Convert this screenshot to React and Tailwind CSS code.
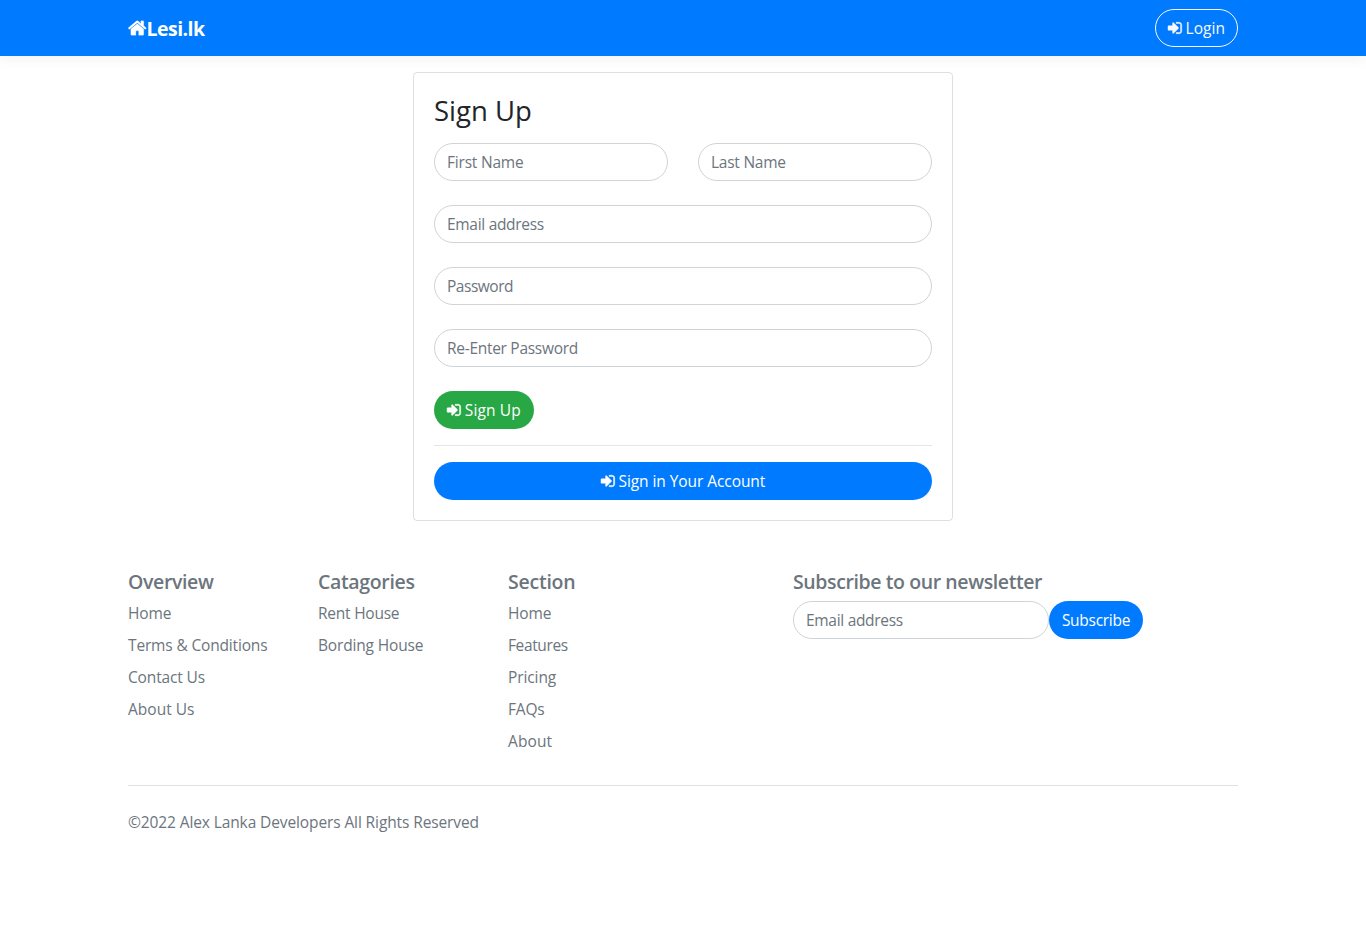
import React from "react";

function HomeIcon() {
  return (
    <svg viewBox="0 0 1664 1792" fill="currentColor" stroke="currentColor" strokeWidth="24" className="h-5 w-[18.57px] shrink-0 overflow-visible">
      <path transform="translate(-64 0)" d="M1472 992v480q0 26-19 45t-45 19h-384v-384h-256v384h-384q-26 0-45-19t-19-45v-480q0-1 .5-3t.5-3l575-474 575 474q1 2 1 6zm223-69l-62 74q-8 9-21 11h-3q-13 0-21-7l-692-577-692 577q-12 8-24 7-13-2-21-11l-62-74q-8-10-7-23.5t11-21.5l719-599q32-26 76-26t76 26l244 204v-195q0-14 9-23t23-9h192q14 0 23 9t9 23v408l219 182q10 8 11 21.5t-7 23.5z" />
    </svg>
  );
}

function SignInIcon() {
  return (
    <svg viewBox="0 0 1536 1792" fill="currentColor" stroke="currentColor" strokeWidth="50" className="mr-1 h-4 w-[13.71px] shrink-0 overflow-visible">
      <path d="M1184 896q0 26-19 45l-544 544q-19 19-45 19t-45-19-19-45v-288h-448q-26 0-45-19t-19-45v-384q0-26 19-45t45-19h448v-288q0-26 19-45t45-19 45 19l544 544q19 19 19 45zm352-352v704q0 119-84.500 203.500t-203.500 84.500h-320q-13 0-22.500-9.500t-9.500-22.500q0-4-1-20t-.5-26.500 3-23.500 10-19.500 20.500-6.500h320q66 0 113-47t47-113v-704q0-66-47-113t-113-47h-312l-11.500-1-11.500-3-8-5.500-7-9-2-13.500q0-4-1-20t-.5-26.500 3-23.500 10-19.500 20.500-6.500h320q119 0 203.500 84.500t84.500 203.500z" />
    </svg>
  );
}

function Field({ label, type = "text", className = "" }) {
  return (
    <input
      type={type}
      placeholder={label}
      className={`block h-[38px] min-w-0 rounded-full border border-[#ced4da] bg-white px-3 leading-6 text-[#495057] outline-none placeholder:text-[#6c757d] ${className}`}
    />
  );
}

const columns = [
  {
    title: "Overview",
    tracking: "tracking-[-0.36px]",
    links: [
      ["Home", "tracking-[-0.15px]"],
      ["Terms & Conditions", "tracking-[-0.16px]"],
      ["Contact Us", "tracking-[-0.14px]"],
      ["About Us", "tracking-[0.02px]"],
    ],
  },
  {
    title: "Catagories",
    tracking: "tracking-[-0.34px]",
    links: [
      ["Rent House", "tracking-[-0.24px]"],
      ["Bording House", "tracking-[-0.16px]"],
    ],
  },
  {
    title: "Section",
    tracking: "tracking-[-0.24px]",
    links: [
      ["Home", "tracking-[-0.15px]"],
      ["Features", "tracking-[-0.38px]"],
      ["Pricing", "tracking-[-0.1px]"],
      ["FAQs", "tracking-[-0.2px]"],
      ["About", "tracking-[0.1px]"],
    ],
  },
];

export default function App() {
  return (
    <div className="min-h-[930px] bg-white font-['Open_Sans','Noto_Sans',sans-serif] text-[15.5px] leading-6 text-[#212529]">
      <nav className="flex h-14 justify-center bg-[#007bff] text-white shadow-[0_4px_12px_rgba(0,0,0,0.05)]">
        <div className="flex w-[1110px] items-center justify-between">
          <a href="#" className="flex items-center text-[19.5px] font-bold leading-[30px] tracking-[-0.55px]">
            <HomeIcon />
            <span className="pt-0.5">Lesi.lk</span>
          </a>
          <a href="#" className="flex h-[38px] w-[83px] items-center justify-center rounded-full border border-[#f8f9fa] tracking-[0.05px] text-[#f8f9fa]">
            <SignInIcon />
            <span>Login</span>
          </a>
        </div>
      </nav>

      <main className="mx-auto mt-4 w-[540px] rounded border border-black/[.125] p-5">
        <h3 className="mb-[15px] pt-px text-[27.5px] leading-[33.6px]">Sign Up</h3>
        <form>
          <div className="mb-6 flex gap-[30px]">
            <Field label="First Name" className="flex-1 tracking-[-0.2px]" />
            <Field label="Last Name" className="flex-1 tracking-[-0.24px]" />
          </div>
          <Field label="Email address" type="email" className="mb-6 w-full tracking-[-0.3px]" />
          <Field label="Password" type="password" className="mb-6 w-full tracking-[-0.48px]" />
          <Field label="Re-Enter Password" type="password" className="mb-6 w-full tracking-[-0.29px]" />
          <button type="button" className="flex h-[38px] w-[100px] items-center justify-center rounded-full bg-[#28a745] tracking-[0.15px] text-white">
            <SignInIcon />
            <span>Sign Up</span>
          </button>
        </form>
        <hr className="my-4 border-black/10" />
        <a href="#" className="flex h-[38px] w-full items-center justify-center rounded-full bg-[#007bff] tracking-[-0.07px] text-white">
          <SignInIcon />
          <span>Sign in Your Account</span>
        </a>
      </main>

      <footer className="mx-auto mt-12 w-[1110px] text-[#6c757d]">
        <div className="flex">
          {columns.map((column) => (
            <div key={column.title} className="w-[190px]">
              <h5 className={`mb-[7px] pt-px text-[19.5px] font-semibold leading-6 ${column.tracking}`}>{column.title}</h5>
              <ul className="flex flex-col gap-2">
                {column.links.map(([label, tracking]) => (
                  <li key={label} className={tracking}>
                    <a href="#">{label}</a>
                  </li>
                ))}
              </ul>
            </div>
          ))}
          <div className="ml-[95px] w-[350px]">
            <h5 className="mb-[7px] pt-px text-[19.5px] font-semibold leading-6 tracking-[-0.4px]">Subscribe to our newsletter</h5>
            <form className="flex">
              <Field label="Email address" type="email" className="flex-1 tracking-[-0.3px]" />
              <button type="button" className="h-[38px] w-[94px] rounded-full bg-[#007bff] tracking-[-0.28px] text-white">
                Subscribe
              </button>
            </form>
          </div>
        </div>
        <div className="mt-8 border-t border-[#dee2e6] pt-6">
          <p className="tracking-[-0.11px]">©2022 Alex Lanka Developers All Rights Reserved</p>
        </div>
      </footer>
    </div>
  );
}
